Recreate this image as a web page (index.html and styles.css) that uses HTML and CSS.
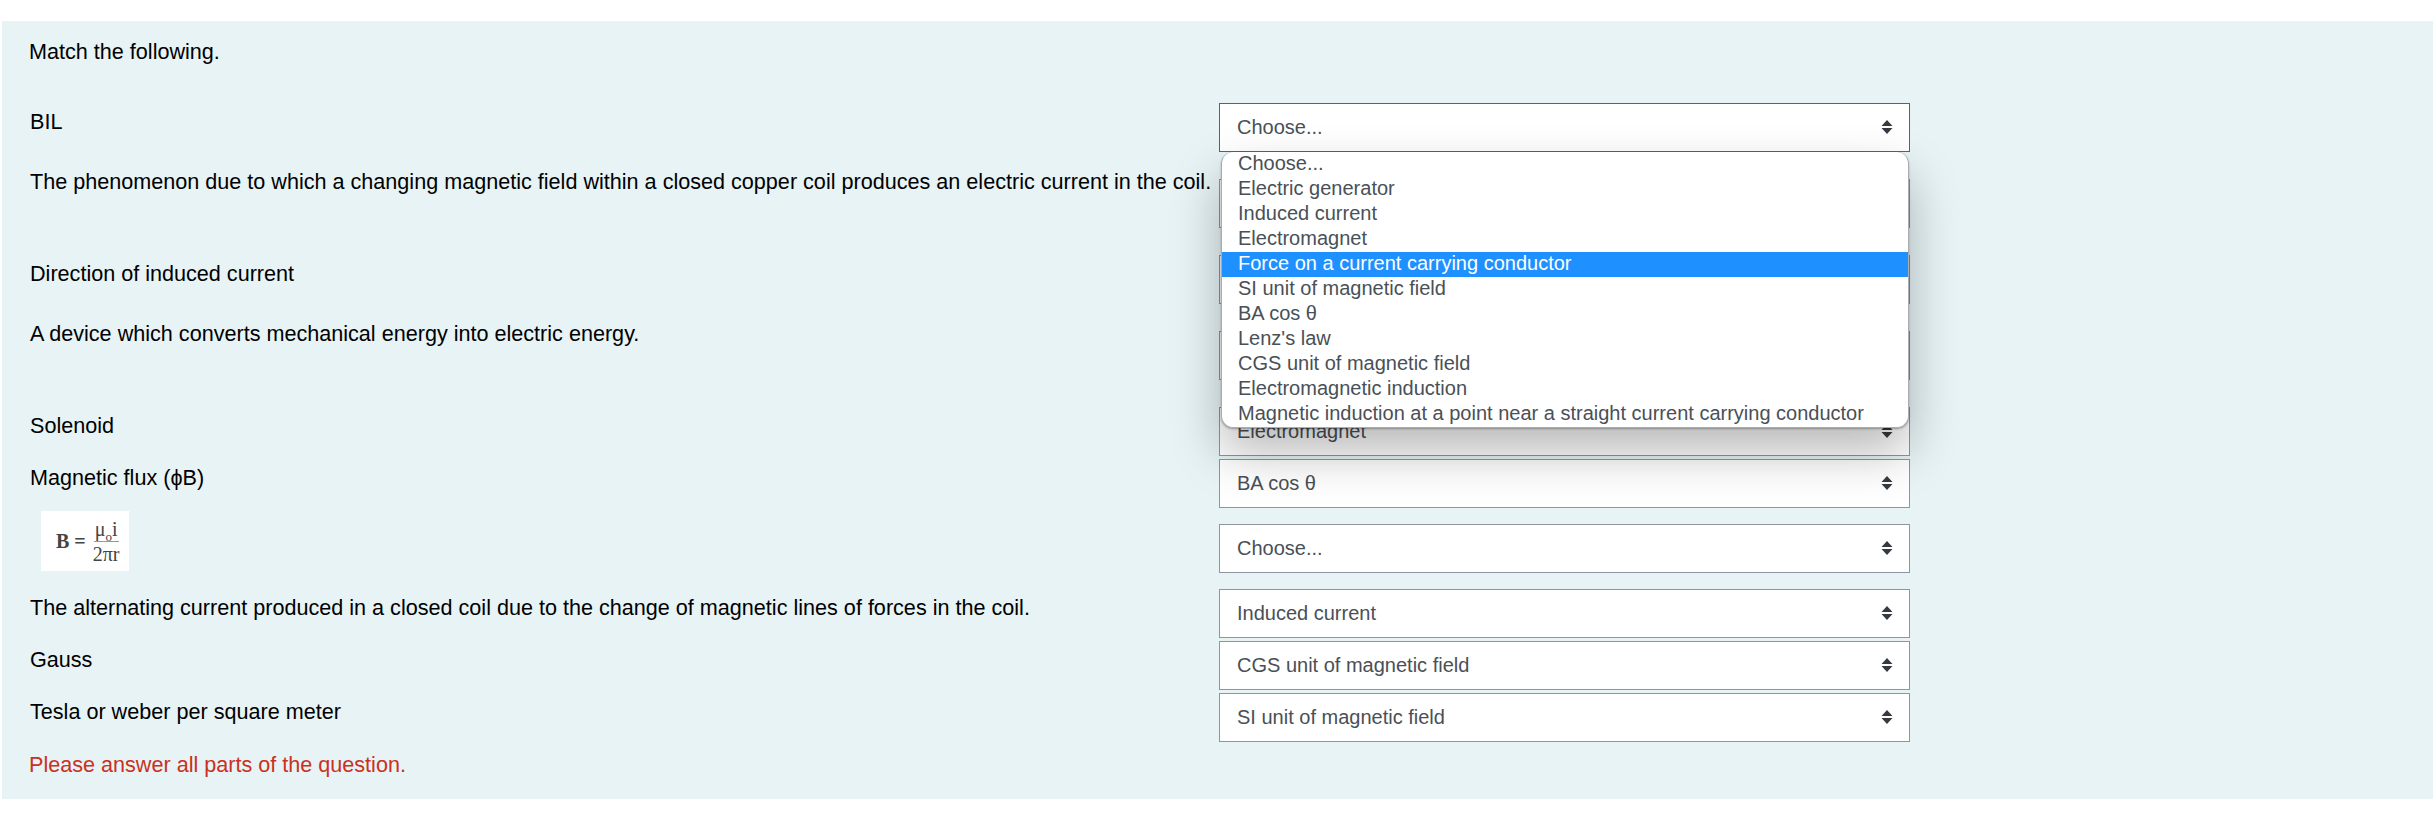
FILE: index.html
```html
<!DOCTYPE html>
<html lang="en">
<head>
    <meta charset="UTF-8">
    <title>Match the following</title>
    <link rel="stylesheet" href="styles.css">
</head>
<body>

    <div class="question">
        <p class="prompt">Match the following.</p>

        <div class="row row-gap">
            <div class="label">BIL</div>
            <div class="select select-focus">
                <span>Choose...</span>
                <svg class="arrows" viewBox="0 0 12 14"><path d="M6 0 11.500 6H.5zM.5 8h11L6 14z"/></svg>
                <!-- open list of the first select -->
                <ul class="dropdown">
                    <li>Choose...</li>
                    <li>Electric generator</li>
                    <li>Induced current</li>
                    <li>Electromagnet</li>
                    <li class="active">Force on a current carrying conductor</li>
                    <li>SI unit of magnetic field</li>
                    <li>BA cos θ</li>
                    <li>Lenz's law</li>
                    <li>CGS unit of magnetic field</li>
                    <li>Electromagnetic induction</li>
                    <li>Magnetic induction at a point near a straight current carrying conductor</li>
                </ul>
            </div>
        </div>

        <!-- the values of the next three selects are covered by the open list -->
        <div class="row row-para">
            <div class="label label-para">The phenomenon due to which a changing magnetic field within a closed copper coil produces an electric current in the coil.</div>
            <div class="select select-low"></div>
        </div>

        <div class="row row-gap">
            <div class="label">Direction of induced current</div>
            <div class="select"></div>
        </div>

        <div class="row row-para">
            <div class="label label-para">A device which converts mechanical energy into electric energy.</div>
            <div class="select select-low"></div>
        </div>

        <div class="row">
            <div class="label">Solenoid</div>
            <div class="select">
                <span>Electromagnet</span>
                <svg class="arrows" viewBox="0 0 12 14"><path d="M6 0 11.500 6H.5zM.5 8h11L6 14z"/></svg>
            </div>
        </div>

        <div class="row">
            <div class="label">Magnetic flux (ϕB)</div>
            <div class="select">
                <span>BA cos θ</span>
                <svg class="arrows" viewBox="0 0 12 14"><path d="M6 0 11.500 6H.5zM.5 8h11L6 14z"/></svg>
            </div>
        </div>

        <div class="row row-formula">
            <div class="label label-formula">
                <div class="formula">
                    <span class="formula-b">B =</span>
                    <span class="fraction">
                        <span class="num">μ<sub>o</sub>i</span>
                        <span class="den">2πr</span>
                    </span>
                </div>
            </div>
            <div class="select select-formula">
                <span>Choose...</span>
                <svg class="arrows" viewBox="0 0 12 14"><path d="M6 0 11.500 6H.5zM.5 8h11L6 14z"/></svg>
            </div>
        </div>

        <div class="row">
            <div class="label">The alternating current produced in a closed coil due to the change of magnetic lines of forces in the coil.</div>
            <div class="select">
                <span>Induced current</span>
                <svg class="arrows" viewBox="0 0 12 14"><path d="M6 0 11.500 6H.5zM.5 8h11L6 14z"/></svg>
            </div>
        </div>

        <div class="row">
            <div class="label">Gauss</div>
            <div class="select">
                <span>CGS unit of magnetic field</span>
                <svg class="arrows" viewBox="0 0 12 14"><path d="M6 0 11.500 6H.5zM.5 8h11L6 14z"/></svg>
            </div>
        </div>

        <div class="row">
            <div class="label">Tesla or weber per square meter</div>
            <div class="select">
                <span>SI unit of magnetic field</span>
                <svg class="arrows" viewBox="0 0 12 14"><path d="M6 0 11.500 6H.5zM.5 8h11L6 14z"/></svg>
            </div>
        </div>

        <p class="error">Please answer all parts of the question.</p>
    </div>

</body>
</html>
```

FILE: styles.css
```css
body {
    margin: 0;
    background-color: #fff;
    font-family: "Liberation Sans", Arial, sans-serif;
    font-size: 21.6px;
    line-height: 24px;
    color: #000;
}
.question {
    margin: 21px 0 0 2px;
    height: 778px;
    box-sizing: border-box;
    padding: 19px 0 0 27px;
    background-color: #e7f3f5;
}
.prompt {
    margin: 0 0 39px;
}
.row {
    display: flex;
    align-items: flex-start;
    margin-left: 1px;
    padding-bottom: 3px;
}
.row-gap {
    padding-bottom: 17px;
}
.row-para {
    padding-bottom: 27px;
}
.row-formula {
    padding-bottom: 16px;
}
.label {
    width: 1189px;
    flex: none;
    padding-top: 7px;
}
.label-para {
    padding-top: 1px;
}
.label-formula {
    padding: 0 0 0 11px;
    box-sizing: border-box;
}
.select {
    position: relative;
    display: flex;
    align-items: center;
    justify-content: space-between;
    box-sizing: border-box;
    width: 691px;
    height: 49px;
    padding: 0 16px 1px 17px;
    border: 1px solid #8f959e;
    background-color: #fff;
    font-size: 20px;
    color: #495057;
}
.select-focus {
    border-color: #4a7a1e;
}
.select-low {
    margin-top: 10px;
}
.select-formula {
    margin-top: 13px;
}
.arrows {
    width: 12px;
    height: 14px;
    fill: #343a40;
}
.dropdown {
    position: absolute;
    z-index: 2;
    top: 48px;
    left: 1px;
    width: 688px;
    box-sizing: border-box;
    height: 276px;
    margin: 0;
    padding: 0;
    list-style: none;
    overflow: hidden;
    background-color: #fff;
    border: 1px solid #a9adb3;
    border-top: 0;
    border-radius: 12px;
    box-shadow: 0 1px 2px rgba(0, 0, 0, .3), 0 24px 50px rgba(0, 0, 0, .28);
    line-height: 25px;
}
.dropdown li {
    height: 25px;
    padding-left: 16px;
    white-space: nowrap;
    line-height: 23px;
}
.dropdown .active {
    background-color: #1e90ff;
    color: #fff;
}
.formula {
    display: flex;
    align-items: center;
    gap: 7px;
    box-sizing: border-box;
    width: 88px;
    height: 60px;
    padding-left: 15px;
    background-color: #fff;
    font-family: "Liberation Serif", serif;
    font-size: 20px;
    line-height: 22px;
    color: #444;
}
.formula-b {
    font-weight: bold;
    white-space: nowrap;
}
.fraction {
    display: flex;
    flex-direction: column;
    align-items: center;
}
.num {
    padding: 0 1px 1px;
    border-bottom: 1px solid #999;
}
.num sub {
    font-size: 13px;
    line-height: 0;
}
.den {
    padding-top: 1px;
}
.error {
    margin: 8px 0 0;
    color: #ca3120;
}
```
